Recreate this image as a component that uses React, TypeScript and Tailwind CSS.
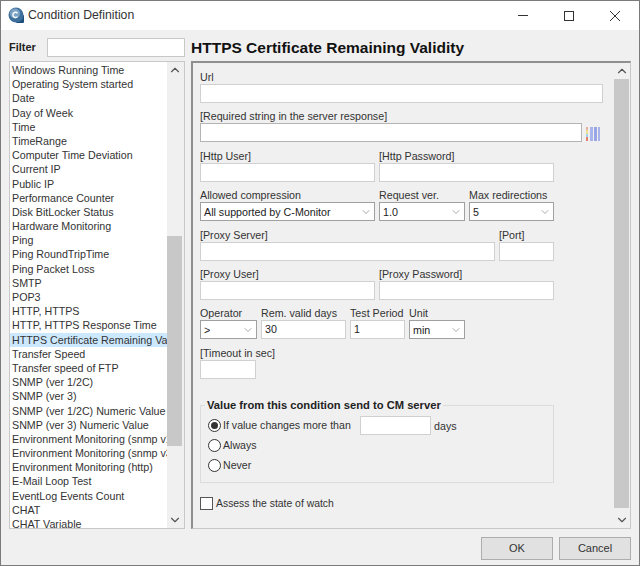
import { ChevronDown, ChevronUp } from "lucide-react";

const CONDITIONS = [
  "Windows Running Time",
  "Operating System started",
  "Date",
  "Day of Week",
  "Time",
  "TimeRange",
  "Computer Time Deviation",
  "Current IP",
  "Public IP",
  "Performance Counter",
  "Disk BitLocker Status",
  "Hardware Monitoring",
  "Ping",
  "Ping RoundTripTime",
  "Ping Packet Loss",
  "SMTP",
  "POP3",
  "HTTP, HTTPS",
  "HTTP, HTTPS Response Time",
  "HTTPS Certificate Remaining Validity",
  "Transfer Speed",
  "Transfer speed of FTP",
  "SNMP (ver 1/2C)",
  "SNMP (ver 3)",
  "SNMP (ver 1/2C) Numeric Value",
  "SNMP (ver 3) Numeric Value",
  "Environment Monitoring (snmp v1/2C)",
  "Environment Monitoring (snmp v3)",
  "Environment Monitoring (http)",
  "E-Mail Loop Test",
  "EventLog Events Count",
  "CHAT",
  "CHAT Variable",
];

function Input({ width, value, dark }: { width: string; value?: string; dark?: boolean }) {
  return (
    <div
      className={`h-[19px] ${width} bg-white border ${
        dark ? "border-[#b4b4b4]" : "border-[#d0d0d0]"
      } px-[3px] text-[10.7px] leading-[17px] text-[#222]`}
    >
      {value}
    </div>
  );
}

function Select({ width, value }: { width: string; value: string }) {
  return (
    <div className={`h-[19px] ${width} bg-white border border-[#a0a0a0] pl-[3px] pr-[2px] flex items-center justify-between text-[10.7px] text-[#222]`}>
      <span>{value}</span>
      <ChevronDown size={12} strokeWidth={1} className="text-[#555]" />
    </div>
  );
}

function Field({ label, width, children }: { label: string; width: string; children: React.ReactNode }) {
  return (
    <div className={`${width} flex flex-col`}>
      <div className="h-[13px] leading-[12px] text-[10.7px] text-[#333] whitespace-nowrap">{label}</div>
      {children}
    </div>
  );
}

function Radio({ checked, label }: { checked?: boolean; label: string }) {
  return (
    <div className="flex items-center gap-[2px] text-[10.6px] text-[#333] whitespace-nowrap">
      <div className="w-[13px] h-[13px] rounded-full border border-[#333] bg-white flex items-center justify-center">
        {checked && <div className="w-[7px] h-[7px] rounded-full bg-[#333]" />}
      </div>
      <span>{label}</span>
    </div>
  );
}

function Scrollbar({ width, thumbTop, thumbBottom }: { width: string; thumbTop: string; thumbBottom: string }) {
  return (
    <div className={`${width} bg-[#f0f0f0] flex flex-col items-start shrink-0`}>
      <div className="w-[15px] h-[16px] shrink-0 flex items-center justify-center">
        <ChevronUp size={14} strokeWidth={2} className="text-[#555]" />
      </div>
      <div className={`${thumbTop} shrink-0`} />
      <div className="w-[15px] flex-1 bg-[#c8c8c8]" />
      <div className={`${thumbBottom} shrink-0`} />
      <div className="w-[15px] h-[17px] shrink-0 flex items-center justify-center">
        <ChevronDown size={14} strokeWidth={2} className="text-[#555]" />
      </div>
    </div>
  );
}

export default function App() {
  return (
    <div className="w-[640px] h-[566px] flex flex-col overflow-hidden border border-[#7a7a7a] bg-[#f0f0f0] font-['Liberation_Sans',Arial,sans-serif]">
      {/* Title bar */}
      <div className="h-[29px] shrink-0 bg-white flex items-center pl-[7px]">
        <svg width="17" height="17" viewBox="0 0 17 17">
          <rect x="8" y="8" width="8" height="8" rx="1" fill="#1d4f7c" />
          <circle cx="8" cy="8" r="7.5" fill="#3f6f9c" />
          <circle cx="7" cy="6.5" r="5" fill="#7ba3c6" />
          <path d="M9.5 6.2a2.6 2.6 0 1 0 0 3.4" fill="none" stroke="#fff" strokeWidth="1.4" />
        </svg>
        <span className="ml-[3px] text-[12.25px] text-[#333]">Condition Definition</span>
        <div className="ml-auto mr-[1px] flex items-center">
          <svg width="46" height="29" viewBox="0 0 46 29">
            <path d="M18 14.5h10" stroke="#333" />
          </svg>
          <svg width="46" height="29" viewBox="0 0 46 29">
            <rect x="18.5" y="10.5" width="9" height="9" fill="none" stroke="#333" />
          </svg>
          <svg width="46" height="29" viewBox="0 0 46 29">
            <path d="M18 10l10 10M28 10l-10 10" stroke="#333" />
          </svg>
        </div>
      </div>

      <div className="flex-1 flex flex-col pl-[8px] pr-[8px]">
        <div className="flex flex-1 gap-[6px] pt-[8px]">
          {/* Left column */}
          <div className="w-[176px] flex flex-col shrink-0">
            <div className="flex items-center h-[19px]">
              <span className="w-[38px] text-[11px] font-bold text-[#222]">Filter</span>
              <div className="h-[19px] flex-1 bg-white border border-[#c8c8c8]" />
            </div>
            <div className="mt-[4px] h-[468px] flex border border-[#c8c8c8] bg-white overflow-hidden">
              <div className="flex-1 min-w-0 overflow-hidden pt-[1px]">
                {CONDITIONS.map((c) => (
                  <div
                    key={c}
                    className={`h-[14.19px] leading-[14px] pl-[2px] text-[10.7px] text-[#333] whitespace-nowrap overflow-hidden ${
                      c.startsWith("HTTPS Cert") ? "bg-[#cce8ff]" : ""
                    }`}
                  >
                    {c}
                  </div>
                ))}
              </div>
              <Scrollbar width="w-[17px]" thumbTop="h-[158px]" thumbBottom="h-[65px]" />
            </div>
          </div>

          {/* Right column */}
          <div className="flex-1 flex flex-col min-w-0">
            <div className="h-[23px] text-[15.5px] leading-[19px] font-bold text-[#111] whitespace-nowrap">
              HTTPS Certificate Remaining Validity
            </div>
            <div className="h-[468px] flex border-l-2 border-t-2 border-[#8f8f8f] border-r border-b border-r-[#c8c8c8] border-b-[#c8c8c8] bg-[#f0f0f0]">
              <div className="flex-1 min-w-0 pl-[7px] pt-[8px] flex flex-col">
                <Field label="Url" width="w-[403px]">
                  <Input width="w-full" />
                </Field>
                <div className="mt-[7.4px] flex items-end gap-[4px]">
                  <Field label="[Required string in the server response]" width="w-[382px]">
                    <Input width="w-full" dark />
                  </Field>
                  <svg width="14" height="14" viewBox="0 1 14 14" className="mb-[1px]">
                    <rect x="0" y="1" width="2" height="3" fill="#e8b0a0" />
                    <rect x="0" y="4" width="2" height="4" fill="#eedd88" />
                    <rect x="0" y="8" width="2" height="3" fill="#9fd6ef" />
                    <rect x="0" y="11" width="2" height="4" fill="#e88070" />
                    <rect x="4" y="1" width="3" height="14" fill="#a8b4ea" />
                    <rect x="8" y="1" width="3" height="14" fill="#98a6e6" />
                    <rect x="12" y="1" width="2" height="14" fill="#a8b4ea" />
                  </svg>
                </div>
                <div className="mt-[7.4px] flex gap-[4px]">
                  <Field label="[Http User]" width="w-[175px]">
                    <Input width="w-full" />
                  </Field>
                  <Field label="[Http Password]" width="w-[175px]">
                    <Input width="w-full" />
                  </Field>
                </div>
                <div className="mt-[7.4px] flex gap-[4px]">
                  <Field label="Allowed compression" width="w-[175px]">
                    <Select width="w-full" value="All supported by C-Monitor" />
                  </Field>
                  <Field label="Request ver." width="w-[86px]">
                    <Select width="w-full" value="1.0" />
                  </Field>
                  <Field label="Max redirections" width="w-[85px]">
                    <Select width="w-full" value="5" />
                  </Field>
                </div>
                <div className="mt-[7.4px] flex gap-[4px]">
                  <Field label="[Proxy Server]" width="w-[295px]">
                    <Input width="w-full" />
                  </Field>
                  <Field label="[Port]" width="w-[55px]">
                    <Input width="w-full" />
                  </Field>
                </div>
                <div className="mt-[7.4px] flex gap-[4px]">
                  <Field label="[Proxy User]" width="w-[175px]">
                    <Input width="w-full" />
                  </Field>
                  <Field label="[Proxy Password]" width="w-[175px]">
                    <Input width="w-full" />
                  </Field>
                </div>
                <div className="mt-[7.4px] flex gap-[4px]">
                  <Field label="Operator" width="w-[57px]">
                    <Select width="w-full" value=">" />
                  </Field>
                  <Field label="Rem. valid days" width="w-[85px]">
                    <Input width="w-full" value="30" />
                  </Field>
                  <Field label="Test Period" width="w-[55px]">
                    <Input width="w-full" value="1" />
                  </Field>
                  <Field label="Unit" width="w-[56px]">
                    <Select width="w-full" value="min" />
                  </Field>
                </div>
                <div className="mt-[7.4px]">
                  <Field label="[Timeout in sec]" width="w-[56px]">
                    <Input width="w-full" />
                  </Field>
                </div>

                {/* Value group */}
                <div className="mt-[26px] w-[354px] h-[78px] border border-[#dcdcdc] relative flex flex-col pl-[7px] pt-[10px]">
                  <span className="absolute -top-[8px] left-[4px] bg-[#f0f0f0] px-[2px] text-[11.2px] leading-[14px] font-bold text-[#222]">
                    Value from this condition send to CM server
                  </span>
                  <div className="flex items-center h-[20px]">
                    <div className="w-[152px]">
                      <Radio checked label="If value changes more than" />
                    </div>
                    <Input width="w-[71px]" />
                    <span className="ml-[3px] text-[10.7px] text-[#333]">days</span>
                  </div>
                  <div className="h-[20px] flex items-center">
                    <Radio label="Always" />
                  </div>
                  <div className="h-[20px] flex items-center">
                    <Radio label="Never" />
                  </div>
                </div>

                <div className="mt-[13px] flex items-center gap-[3px] text-[10.4px] text-[#333]">
                  <div className="w-[13px] h-[13px] bg-white border border-[#555]" />
                  <span>Assess the state of watch</span>
                </div>
              </div>
              <Scrollbar width="w-[16px]" thumbTop="h-0" thumbBottom="h-[3px]" />
            </div>
          </div>
        </div>

        {/* Footer */}
        <div className="h-[37px] shrink-0 flex justify-end items-start gap-[6px] pt-[8px]">
          <button className="w-[72px] h-[23px] bg-[#e1e1e1] border border-[#adadad] text-[11px] text-[#333]">OK</button>
          <button className="w-[72px] h-[23px] bg-[#e1e1e1] border border-[#adadad] text-[11px] text-[#333]">Cancel</button>
        </div>
      </div>
    </div>
  );
}
